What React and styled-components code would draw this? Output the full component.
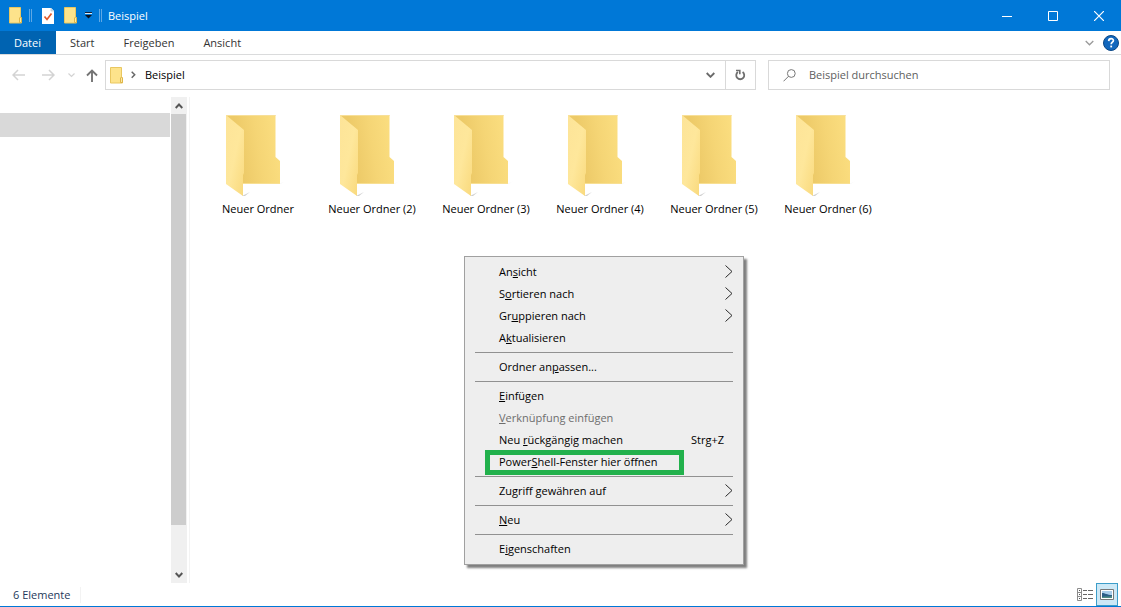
import React from "react";
import styled, { createGlobalStyle } from "styled-components";

const GlobalStyle = createGlobalStyle`
  *, *::before, *::after { box-sizing: border-box; }
  body {
    margin: 0;
    background: #ffffff;
    color: #000000;
    font-family: "Open Sans", "Noto Sans", sans-serif;
    font-size: 11px;
    line-height: 16px;
  }
  button, input { font: inherit; color: inherit; }
  svg { display: block; flex: none; }
`;

const Window = styled.div`
  display: flex;
  flex-direction: column;
  height: 100vh;
  position: relative;
  overflow: hidden;
  border-bottom: 1px solid #0078d7;
`;

const BareButton = styled.button`
  display: flex;
  align-items: center;
  justify-content: center;
  padding: 0;
  border: 0;
  background: transparent;
`;

/* Title bar */
const TitleBar = styled.header`
  display: flex;
  align-items: center;
  flex: none;
  height: 31px;
  padding-left: 9px;
  background: #0078d7;
  color: #ffffff;
`;

const QuickAccess = styled.div`
  display: flex;
  align-items: center;
`;

const QuickButton = styled(BareButton)`
  width: ${(p) => p.$width}px;
  height: 24px;
`;

const Grip = styled.span`
  width: 3px;
  height: 13px;
  margin: 0 ${(p) => p.$gap}px;
  border: solid #5fa8e4;
  border-width: 0 1px;
`;

const Title = styled.h1`
  flex: 1;
  margin: 0;
  font-size: 11px;
  font-weight: 400;
`;

const CaptionButton = styled(BareButton)`
  width: 46px;
  height: 30px;
  padding-left: 2px;
`;

/* Ribbon */
const Ribbon = styled.nav`
  display: flex;
  align-items: center;
  flex: none;
  height: 24px;
  border-bottom: 1px solid #dadbdc;
`;

const Tab = styled.button`
  height: 23px;
  padding: 0 15px 0 14px;
  border: 0;
  background: ${(p) => (p.$primary ? "#0063b1" : "transparent")};
  color: ${(p) => (p.$primary ? "#ffffff" : "#333333")};
`;

const Spacer = styled.div`
  flex: 1;
`;

const RibbonButton = styled(BareButton)`
  width: 21px;
  height: 23px;
`;

/* Address row */
const AddressRow = styled.div`
  display: flex;
  align-items: center;
  flex: none;
  height: 42px;
  padding: 0 11px 2px 5px;
`;

const NavButton = styled(BareButton)`
  width: ${(p) => p.$width}px;
  height: 30px;
`;

const AddressBox = styled.div`
  display: flex;
  flex: 1;
  height: 30px;
  border: 1px solid #d9d9d9;
`;

const Crumbs = styled.div`
  display: flex;
  align-items: center;
  flex: 1;
  padding-left: 4px;
`;

const Crumb = styled.a`
  padding-left: 2px;
  color: inherit;
  text-decoration: none;
`;

const CrumbArrow = styled.span`
  display: flex;
  justify-content: center;
  width: 20px;
`;

const BoxButton = styled(BareButton)`
  width: 30px;
  border-left: ${(p) => (p.$divided ? "1px solid #d9d9d9" : "0")};
`;

const SearchBox = styled.label`
  display: flex;
  align-items: center;
  gap: 13px;
  flex: 0 1 342px;
  height: 30px;
  margin-left: 12px;
  padding: 0 14px;
  border: 1px solid #d9d9d9;
`;

const SearchInput = styled.input`
  flex: 1;
  min-width: 0;
  padding: 0;
  border: 0;
  outline: 0;
  background: transparent;
  &::placeholder { color: #606060; opacity: 1; }
`;

/* Body */
const Body = styled.div`
  display: flex;
  flex: 1;
  min-height: 0;
`;

const Sidebar = styled.aside`
  width: 170px;
  padding-top: 16px;
`;

const SidebarEntry = styled.div`
  height: 24px;
  background: #d9d9d9;
`;

const ScrollBar = styled.div`
  display: flex;
  flex-direction: column;
  width: 16px;
  margin: 0 2px 0 1px;
  background: #f0f0f0;
`;

const ScrollButton = styled(BareButton)`
  height: 17px;
`;

const ScrollTrack = styled.div`
  display: flex;
  flex: 1;
  padding-right: 1px;
`;

const ScrollThumb = styled.div`
  flex: 1;
  height: 91%;
  background: #cdcdcd;
`;

const Files = styled.ul`
  display: grid;
  grid-template-columns: repeat(auto-fill, 114px);
  align-content: start;
  flex: 1;
  margin: 0;
  padding: 17px 0 0 11px;
  border-left: 1px solid #f3f3f3;
  list-style: none;
`;

const FileButton = styled.button`
  display: flex;
  flex-direction: column;
  align-items: center;
  gap: 3px;
  width: 114px;
  padding: 0;
  border: 0;
  background: transparent;
  white-space: nowrap;
`;

/* Status bar */
const StatusBar = styled.footer`
  display: flex;
  align-items: center;
  flex: none;
  height: 23px;
  padding: 0 3px 0 13px;
  color: #1e395b;
`;

const StatusText = styled.span`
  padding-right: 10px;
  border-right: 1px solid #f3f3f3;
`;

const ViewButton = styled(BareButton)`
  width: 22px;
  height: 23px;
  border: ${(p) => (p.$active ? "1px solid #3c9dc9" : "0")};
  background: ${(p) => (p.$active ? "#cce8f6" : "transparent")};
`;

/* Context menu */
const Menu = styled.div`
  position: absolute;
  top: 256px;
  left: 464px;
  width: 280px;
  padding: 4px 0;
  background: #eeeeee;
  border: 1px solid #a0a0a0;
  box-shadow: 3px 3px 2px rgba(0, 0, 0, 0.5);
`;

const MenuItem = styled.button`
  display: flex;
  align-items: center;
  justify-content: space-between;
  position: relative;
  width: 100%;
  height: 22px;
  padding: 0 10px 0 34px;
  border: 0;
  background: transparent;
  color: ${(p) => (p.disabled ? "#6d6d6d" : "#000000")};
`;

const Shortcut = styled.span`
  padding-right: 9px;
`;

const Separator = styled.hr`
  height: 1px;
  margin: 3px 10px;
  border: 0;
  background: #919191;
`;

const Highlight = styled.span`
  position: absolute;
  top: -1px;
  left: 20px;
  width: 199px;
  height: 25px;
  border: 5px solid #22b14c;
`;

/* Icons */
const SmallFolder = () => (
  <svg width="13" height="17" viewBox="0 0 13 17">
    <path d="M.5.5h11v9.500l1 1v5H.5z" fill="#fde38b" stroke="#e9c760" />
    <path d="M10.500 15.500v-4.500l1-1 1 1v4.500z" fill="#fceaa6" stroke="#dfb548" />
  </svg>
);

const Checklist = () => (
  <svg width="12" height="16" viewBox="0 0 12 16">
    <path d="M0 0h9l3 3v13H0z" fill="#fff" />
    <path d="M9 0v3h3" fill="#d8e3ec" stroke="#a9bfd0" strokeWidth=".6" />
    <path d="M2.500 8.500l2.500 3 4.500-6" fill="none" stroke="#e0592a" strokeWidth="1.700" />
  </svg>
);

const CustomizeArrow = () => (
  <svg width="7" height="7" viewBox="0 0 7 7">
    <path d="M0 .5h7" stroke="#10213a" />
    <path d="M0 1.500h7" stroke="#d6e8f8" />
    <path d="M0 3h7L3.500 6.500z" fill="#08111e" />
  </svg>
);

const Chevron = ({ d, w, h, color, stroke = 1 }) => (
  <svg width={w} height={h} viewBox={`0 0 ${w} ${h}`}>
    <path d={d} fill="none" stroke={color} strokeWidth={stroke} />
  </svg>
);

const DownChevron = ({ color, stroke }) => (
  <Chevron d="M.700 1l3.800 3.800L8.300 1" w={9} h={6} color={color} stroke={stroke} />
);

const BackArrow = ({ flip }) => (
  <svg width="13" height="12" viewBox="0 0 13 12">
    <path
      d={flip ? "M0 6h12M7 1l5 5-5 5" : "M13 6H1M6 1L1 6l5 5"}
      fill="none"
      stroke="#d3d3d3"
      strokeWidth="1.500"
    />
  </svg>
);

const UpArrow = () => (
  <svg width="12" height="13" viewBox="0 0 12 13">
    <path d="M6 13V1.500M1 6.500l5-5 5 5" fill="none" stroke="#747474" strokeWidth="1.900" />
  </svg>
);

/* Clockwise arrow, open at the top left, with its head on the left. */
const Refresh = () => (
  <svg width="11" height="12" viewBox="0 0 11 12">
    <path d="M7.600 3a4 4 0 1 1-4.700 0" fill="none" stroke="#6e6e6e" strokeWidth="1.800" />
    <path d="M1 1.500h3.800v3.800" fill="none" stroke="#6e6e6e" strokeWidth="1.600" />
  </svg>
);

const Magnifier = () => (
  <svg width="13" height="13" viewBox="0 0 13 13">
    <circle cx="8.300" cy="4.500" r="3.900" fill="none" stroke="#777" />
    <path d="M5.500 7.300L.5 12.300" stroke="#777" />
  </svg>
);

const Help = () => (
  <svg width="16" height="16" viewBox="0 0 16 16">
    <circle cx="8" cy="8" r="7.500" fill="#1267bd" stroke="#0b4785" />
    <path
      d="M5.700 6.100c.1-3.200 4.700-3 4.700-.5 0 1.600-2.200 1.700-2.200 3.700"
      fill="none"
      stroke="#fff"
      strokeWidth="1.700"
    />
    <path d="M7.300 10.600h1.800v1.800H7.300z" fill="#fff" />
  </svg>
);

const LargeFolder = () => (
  <svg width="64" height="84" viewBox="0 0 64 84">
    <defs>
      <linearGradient id="folderBack" x1="0" y1=".6" x2="1" y2=".4">
        <stop offset=".25" stopColor="#edca68" />
        <stop offset=".6" stopColor="#f5d575" />
        <stop offset="1" stopColor="#fbde80" />
      </linearGradient>
      <linearGradient id="folderFront" x1="0" y1="0" x2="1" y2="1">
        <stop offset="0" stopColor="#fde498" />
        <stop offset=".5" stopColor="#fee79b" />
        <stop offset="1" stopColor="#f9d97c" />
      </linearGradient>
      <linearGradient id="folderShade">
        <stop offset="0" stopColor="#aaa" stopOpacity=".6" />
        <stop offset="1" stopColor="#aaa" stopOpacity="0" />
      </linearGradient>
    </defs>
    <path d="M52 70l8-3-5 3zM16 82l8-4-5 4z" fill="url(#folderShade)" />
    <path d="M0 1h49.500v42l4.500 4v23H17z" fill="url(#folderBack)" />
    <path d="M0 1.500h49.500" stroke="#f7df98" />
    <path d="M17 69.500h37" stroke="#f8df92" />
    <path d="M0 1l18 15v43l-1 2v21L0 70z" fill="url(#folderFront)" />
  </svg>
);

const DetailsIcon = () => (
  <svg width="16" height="13" viewBox="0 0 16 13">
    <path d="M.5.5h4v12h-4zM.5 4.500h4M.5 8.500h4" fill="none" stroke="#8c8c8c" />
    <path d="M2 2.500h1M2 6.500h1M2 10.500h1" stroke="#555" />
    <path d="M6 2.500h4M11 2.500h5M6 6.500h4M11 6.500h5M6 10.500h4M11 10.500h5" stroke="#666" />
  </svg>
);

const ThumbnailIcon = () => (
  <svg width="14" height="11" viewBox="0 0 14 11">
    <path d="M.5.5h13v10H.5z" fill="#fff" stroke="#777" />
    <path d="M2 2h10v7H2z" fill="#a9cdea" />
    <path d="M2 4c3 0 5 2 10 2v3H2z" fill="#2c5e87" />
    <path d="M2 8c4-1 6 0 10-1v2H2z" fill="#4f8c84" />
  </svg>
);

/* Splits a label at its access key and underlines that letter. */
const AccessLabel = ({ text, at }) => (
  <span>
    {text.slice(0, at)}
    <u>{text[at]}</u>
    {text.slice(at + 1)}
  </span>
);

const folders = [
  "Neuer Ordner",
  "Neuer Ordner (2)",
  "Neuer Ordner (3)",
  "Neuer Ordner (4)",
  "Neuer Ordner (5)",
  "Neuer Ordner (6)",
];

const menuGroups = [
  [
    { text: "Ansicht", at: 2, submenu: true },
    { text: "Sortieren nach", at: 1, submenu: true },
    { text: "Gruppieren nach", at: 2, submenu: true },
    { text: "Aktualisieren", at: 1 },
  ],
  [{ text: "Ordner anpassen...", at: 9 }],
  [
    { text: "Einfügen", at: 0 },
    { text: "Verknüpfung einfügen", at: 0, disabled: true },
    { text: "Neu rückgängig machen", at: 4, shortcut: "Strg+Z" },
    { text: "PowerShell-Fenster hier öffnen", at: 5, highlighted: true },
  ],
  [{ text: "Zugriff gewähren auf", at: 2, submenu: true }],
  [{ text: "Neu", at: 0, submenu: true }],
  [{ text: "Eigenschaften", at: 1 }],
];

export default function App() {
  return (
    <Window>
      <GlobalStyle />
      <TitleBar>
        <QuickAccess>
          <QuickButton $width={13} aria-label="Ordner"><SmallFolder /></QuickButton>
          <Grip $gap={7} />
          <QuickButton $width={18} aria-label="Eigenschaften"><Checklist /></QuickButton>
          <QuickButton $width={27} aria-label="Neuer Ordner"><SmallFolder /></QuickButton>
          <QuickButton $width={9} aria-label="Anpassen"><CustomizeArrow /></QuickButton>
          <Grip $gap={6} />
        </QuickAccess>
        <Title>Beispiel</Title>
        <CaptionButton aria-label="Minimieren">
          <Chevron d="M0 5.500h10" w={10} h={10} color="#fff" />
        </CaptionButton>
        <CaptionButton aria-label="Maximieren">
          <Chevron d="M.5.5h9v9h-9z" w={10} h={10} color="#fff" />
        </CaptionButton>
        <CaptionButton aria-label="Schließen">
          <Chevron d="M0 0l10 10M10 0L0 10" w={10} h={10} color="#fff" stroke={1.2} />
        </CaptionButton>
      </TitleBar>

      <Ribbon>
        <Tab $primary>Datei</Tab>
        <Tab>Start</Tab>
        <Tab>Freigeben</Tab>
        <Tab>Ansicht</Tab>
        <Spacer />
        <RibbonButton aria-label="Menüband erweitern">
          <DownChevron color="#9a9a9a" stroke={1.3} />
        </RibbonButton>
        <RibbonButton aria-label="Hilfe"><Help /></RibbonButton>
      </Ribbon>

      <AddressRow>
        <NavButton $width={27} aria-label="Zurück"><BackArrow /></NavButton>
        <NavButton $width={32} aria-label="Vorwärts"><BackArrow flip /></NavButton>
        <NavButton $width={15} aria-label="Verlauf">
          <Chevron d="M.5.5l3 3 3-3" w={7} h={5} color="#d3d3d3" stroke={1.2} />
        </NavButton>
        <NavButton $width={26} aria-label="Nach oben"><UpArrow /></NavButton>
        <AddressBox>
          <Crumbs>
            <SmallFolder />
            <CrumbArrow>
              <Chevron d="M.700.700l3 3-3 3" w={5} h={8} color="#666" stroke={1.5} />
            </CrumbArrow>
            <Crumb href="#">Beispiel</Crumb>
          </Crumbs>
          <BoxButton aria-label="Vorherige Orte">
            <DownChevron color="#6a6a6a" stroke={1.9} />
          </BoxButton>
          <BoxButton $divided aria-label="Aktualisieren"><Refresh /></BoxButton>
        </AddressBox>
        <SearchBox>
          <Magnifier />
          <SearchInput type="text" aria-label="Suche" placeholder="Beispiel durchsuchen" />
        </SearchBox>
      </AddressRow>

      <Body>
        <Sidebar><SidebarEntry /></Sidebar>
        <ScrollBar>
          <ScrollButton aria-label="Nach oben scrollen">
            <Chevron d="M.700 5l3.300-3.500L7.300 5" w={8} h={6} color="#555" stroke={1.9} />
          </ScrollButton>
          <ScrollTrack><ScrollThumb /></ScrollTrack>
          <ScrollButton aria-label="Nach unten scrollen">
            <Chevron d="M.700 1L4 4.500 7.300 1" w={8} h={6} color="#555" stroke={1.9} />
          </ScrollButton>
        </ScrollBar>
        <Files>
          {folders.map((name) => (
            <li key={name}>
              <FileButton>
                <LargeFolder />
                {name}
              </FileButton>
            </li>
          ))}
        </Files>
      </Body>

      <StatusBar>
        <StatusText>6 Elemente</StatusText>
        <Spacer />
        <ViewButton aria-label="Details"><DetailsIcon /></ViewButton>
        <ViewButton $active aria-label="Große Symbole"><ThumbnailIcon /></ViewButton>
      </StatusBar>

      <Menu role="menu">
        {menuGroups.map((group, i) => (
          <React.Fragment key={i}>
            {i > 0 && <Separator />}
            {group.map((item) => (
              <MenuItem key={item.text} role="menuitem" disabled={item.disabled}>
                <AccessLabel text={item.text} at={item.at} />
                {item.shortcut && <Shortcut>{item.shortcut}</Shortcut>}
                {item.submenu && (
                  <Chevron d="M.5.5l6.500 6-6.500 6" w={8} h={14} color="#2a2a2a" />
                )}
                {item.highlighted && <Highlight />}
              </MenuItem>
            ))}
          </React.Fragment>
        ))}
      </Menu>
    </Window>
  );
}
